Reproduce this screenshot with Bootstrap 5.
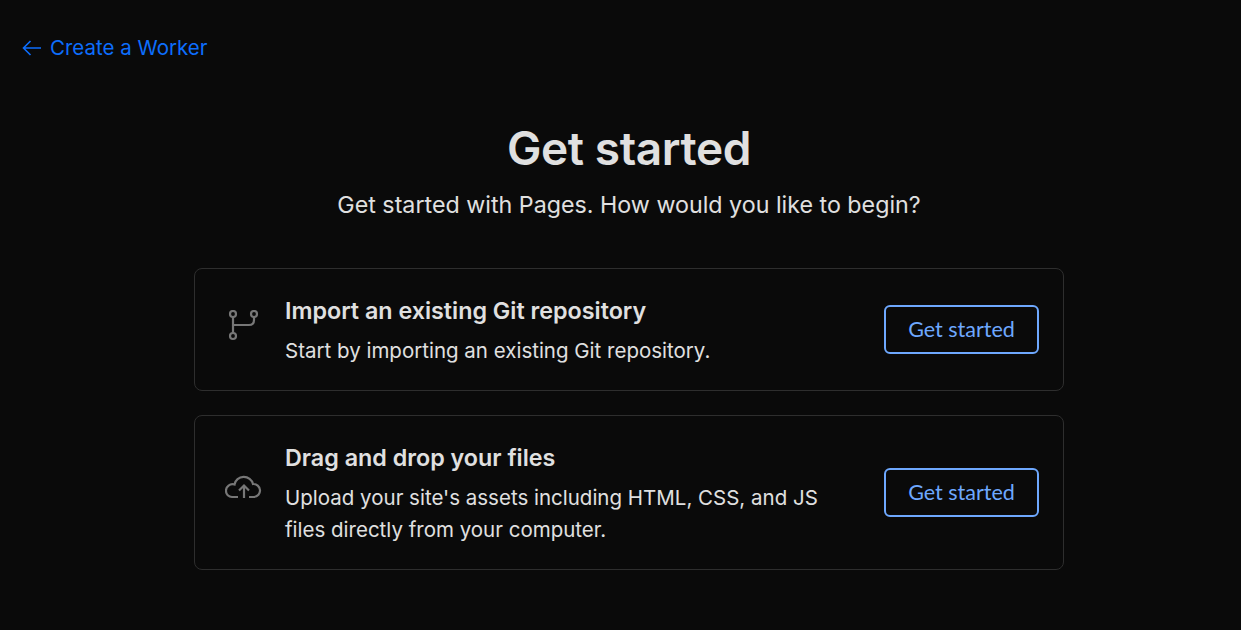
<!DOCTYPE html>
<html lang="en">
<head>
    <meta charset="UTF-8">
    <meta name="viewport" content="width=device-width, initial-scale=1.0">
    <title>Get started</title>
    <link href="https://cdn.jsdelivr.net/npm/bootstrap@5.3.3/dist/css/bootstrap.min.css" rel="stylesheet">
    <script src="https://cdn.jsdelivr.net/npm/bootstrap@5.3.3/dist/js/bootstrap.bundle.min.js"></script>
    <style>
        body {background: #0a0a0a; color: #e0e0e0; font-family: "Inter", "Liberation Sans", sans-serif;}
        .page-wrap {padding: 37px 0 0;}
        .back-link {color: #0d6efd; font-size: 20.5px; line-height: 22px; text-decoration: none; margin-left: 22px;}
        .back-link svg {margin-right: 8px;}
        .main-col {padding-left: 17px;}
        .hero-title {font-size: 46px; font-weight: 600; line-height: 56px; letter-spacing: -0.4px; margin-top: 58px; margin-bottom: 13px; color: #e0e0e0;}
        .hero-sub {font-size: 23.25px; line-height: 32px; margin-bottom: 47px;}
        .start-list {width: 870px; gap: 24px;}
        .start-card {background: #0a0a0a; border: 1px solid #2e2e2e; border-radius: 8px; padding: 24px 24px 23px 29px;}
        .start-icon {width: 61px; flex-shrink: 0; margin-bottom: 9px;}
        .icon-cloud {margin: 0 0 4px 1px;}
        .start-title {font-size: 23.3px; font-weight: 600; line-height: 36px; margin-bottom: 6px;}
        .start-text {font-size: 20.5px; line-height: 32px; margin: 0; max-width: 560px;}
        .btn-start {width: 155px; height: 49px; margin-bottom: 1px; font-family: "Lato", "Open Sans", sans-serif; font-size: 21.5px; color: #6ea8fe; border: 2px solid #6ea8fe; border-radius: 6px; background: transparent; padding: 0; flex-shrink: 0;}
    </style>
</head>
<body>
<div class="page-wrap">
    <a href="#" class="back-link d-inline-flex align-items-center">
        <svg width="20" height="16" viewBox="0 0 20 16" fill="none" stroke="#0d6efd" stroke-width="1.6"><path d="M19 8H1.500M8.500 1 1.500 8l7 7"/></svg>
        Create a Worker
    </a>
    <div class="main-col">
        <h1 class="hero-title text-center">Get started</h1>
        <p class="hero-sub text-center">Get started with Pages. How would you like to begin?</p>
        <div class="start-list d-flex flex-column mx-auto">
            <div class="start-card d-flex align-items-center">
                <div class="start-icon">
                    <svg class="d-block" width="36" height="32" viewBox="0 0 36 32" fill="none" stroke="#777" stroke-width="2.2"><circle cx="9" cy="4" r="3"/><circle cx="9" cy="26" r="3"/><circle cx="30" cy="4" r="3"/><path d="M9 7v16M9 15h16q5 0 5-5V7"/></svg>
                </div>
                <div class="flex-grow-1">
                    <div class="start-title">Import an existing Git repository</div>
                    <p class="start-text">Start by importing an existing Git repository.</p>
                </div>
                <button type="button" class="btn btn-start">Get started</button>
            </div>
            <div class="start-card d-flex align-items-center">
                <div class="start-icon">
                    <svg class="d-block icon-cloud" width="37" height="24" viewBox="0 0 37 24" fill="none" stroke="#777" stroke-width="2.2"><path d="M13 22H7A6 6 0 0 1 1 16a6.500 6.500 0 0 1 8.500-6.500A9.400 9 0 0 1 28 9a6.500 6.500 0 0 1 1 13h-5"/><path d="M19 23V11M14 15.500l5-5 5 5"/></svg>
                </div>
                <div class="flex-grow-1">
                    <div class="start-title">Drag and drop your files</div>
                    <p class="start-text">Upload your site's assets including HTML, CSS, and JS files directly from your computer.</p>
                </div>
                <button type="button" class="btn btn-start">Get started</button>
            </div>
        </div>
    </div>
</div>
</body>
</html>
